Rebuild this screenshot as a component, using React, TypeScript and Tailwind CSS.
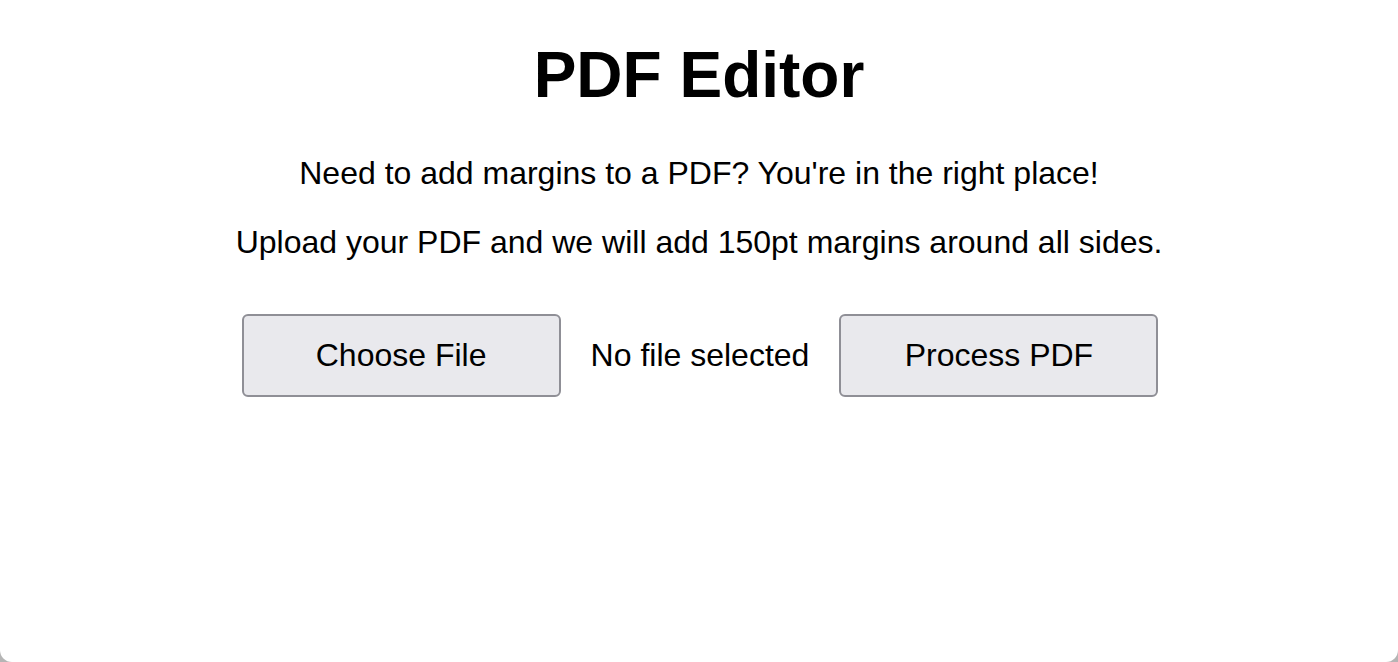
export default function App() {
  return (
    <div className="h-[662px] bg-[#b5b5b5]">
      <div
        className="flex h-[662px] flex-col items-center rounded-b-[12px] bg-white text-black"
        style={{ fontFamily: '"Liberation Sans", Arial, sans-serif' }}
      >
        <h1 className="mt-[38px] text-[64px] font-bold leading-[74px]">PDF Editor</h1>
        <p className="mt-[43px] text-[32px] leading-[37px]">
          Need to add margins to a PDF? You're in the right place!
        </p>
        <p className="mt-[32px] text-[32px] leading-[37px]">
          Upload your PDF and we will add 150pt margins around all sides.
        </p>
        <div className="mt-[53px] flex items-center text-[32px] leading-[37px]">
          <button className="ml-[2px] h-[83px] w-[319px] rounded-[6px] border-2 border-[#8f8f96] bg-[#e9e9ed]">
            Choose File
          </button>
          <span className="ml-[30px]">No file selected</span>
          <button className="ml-[30px] h-[83px] w-[319px] rounded-[6px] border-2 border-[#8f8f96] bg-[#e9e9ed]">
            Process PDF
          </button>
        </div>
      </div>
    </div>
  );
}
